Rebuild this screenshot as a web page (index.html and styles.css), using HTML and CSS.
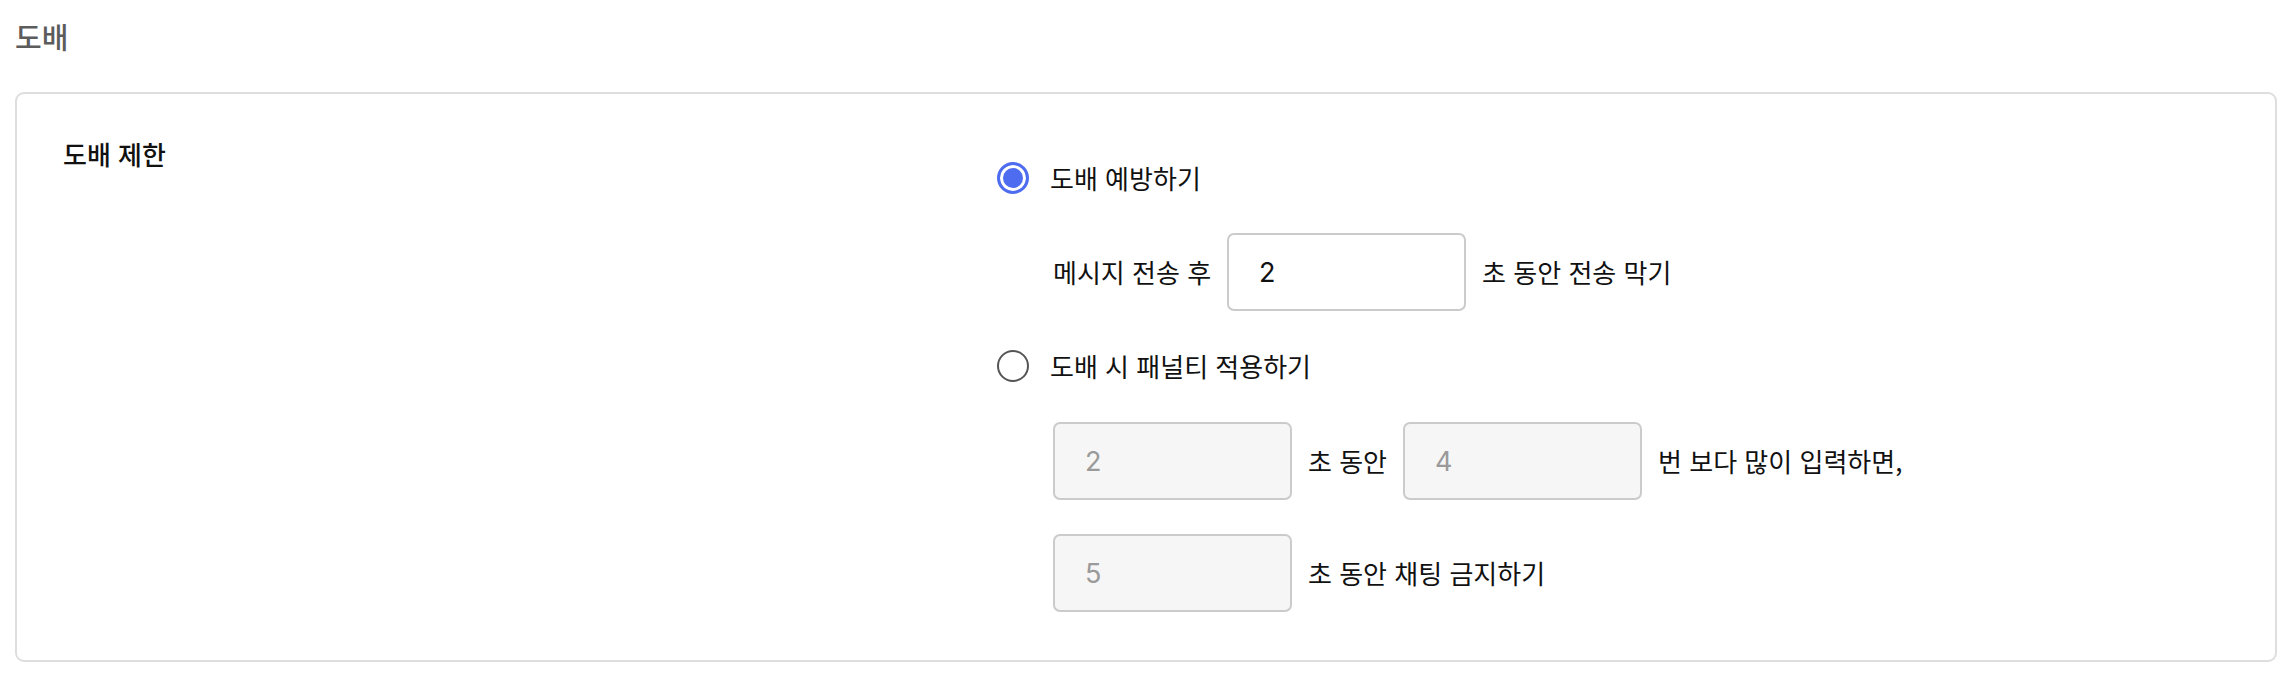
FILE: index.html
```html
<!DOCTYPE html>
<html lang="ko">
<head>
<meta charset="utf-8">
<title>도배</title>
<link rel="stylesheet" href="styles.css">
</head>
<body>
<div class="page">
  <h1 class="title">도배</h1>
  <section class="card">
    <div class="label">도배 제한</div>
    <div class="options">
      <div class="radio-row">
        <span class="radio checked"></span>
        <span class="radio-text">도배 예방하기</span>
      </div>
      <div class="sub-row first">
        <span class="txt">메시지 전송 후</span>
        <div class="input">2</div>
        <span class="txt">초 동안 전송 막기</span>
      </div>
      <div class="radio-row second">
        <span class="radio"></span>
        <span class="radio-text">도배 시 패널티 적용하기</span>
      </div>
      <div class="sub-row third">
        <div class="input disabled">2</div>
        <span class="txt">초 동안</span>
        <div class="input disabled">4</div>
        <span class="txt">번 보다 많이 입력하면,</span>
      </div>
      <div class="sub-row fourth">
        <div class="input disabled">5</div>
        <span class="txt">초 동안 채팅 금지하기</span>
      </div>
    </div>
  </section>
</div>
</body>
</html>
```
FILE: styles.css
```css
* { box-sizing: border-box; }
html, body {
  margin: 0;
  background: #fff;
  font-family: "Noto Sans CJK KR", "Noto Sans", sans-serif;
  color: #111;
}
.page {
  padding: 16px 19px 0 15px;
}
.title {
  margin: 0 0 36px 0;
  font-size: 29px;
  line-height: 40px;
  font-weight: 500;
  color: #5c5c5c;
}
.card {
  border: 2px solid #dedede;
  border-radius: 9px;
  padding: 42px 46px 48px 46px;
  display: grid;
  grid-template-columns: 934px 1fr;
  height: 570px;
}
.label {
  font-size: 26px;
  line-height: 36px;
  font-weight: 500;
  color: #111;
}
.options {
  margin-top: 24px;
  display: flex;
  flex-direction: column;
  align-items: flex-start;
}
.radio-row {
  display: flex;
  align-items: center;
  gap: 21px;
  height: 36px;
}
.radio-row.second { margin-top: 37px; }
.radio {
  width: 32px;
  height: 32px;
  border-radius: 50%;
  border: 2px solid #555;
  background: #fff;
  flex: none;
}
.radio.checked {
  border: 3px solid #4e6cef;
  background: #4e6cef;
  box-shadow: inset 0 0 0 3px #fff;
}
.radio-text, .txt {
  font-size: 26px;
  line-height: 36px;
  color: #111;
  white-space: nowrap;
}
.sub-row {
  display: flex;
  align-items: center;
  gap: 16px;
  margin-left: 56px;
}
.sub-row.first { margin-top: 37px; }
.sub-row.third { margin-top: 38px; }
.sub-row.fourth { margin-top: 34px; }
.input {
  width: 239px;
  height: 78px;
  border: 2px solid #cbcbcb;
  border-radius: 7px;
  background: #fff;
  padding-left: 30px;
  display: flex;
  align-items: center;
  font-family: "Inter", "Noto Sans", sans-serif;
  font-size: 27px;
  color: #111;
}
.input.disabled {
  background: #f6f6f6;
  color: #9a9a9a;
}
```
